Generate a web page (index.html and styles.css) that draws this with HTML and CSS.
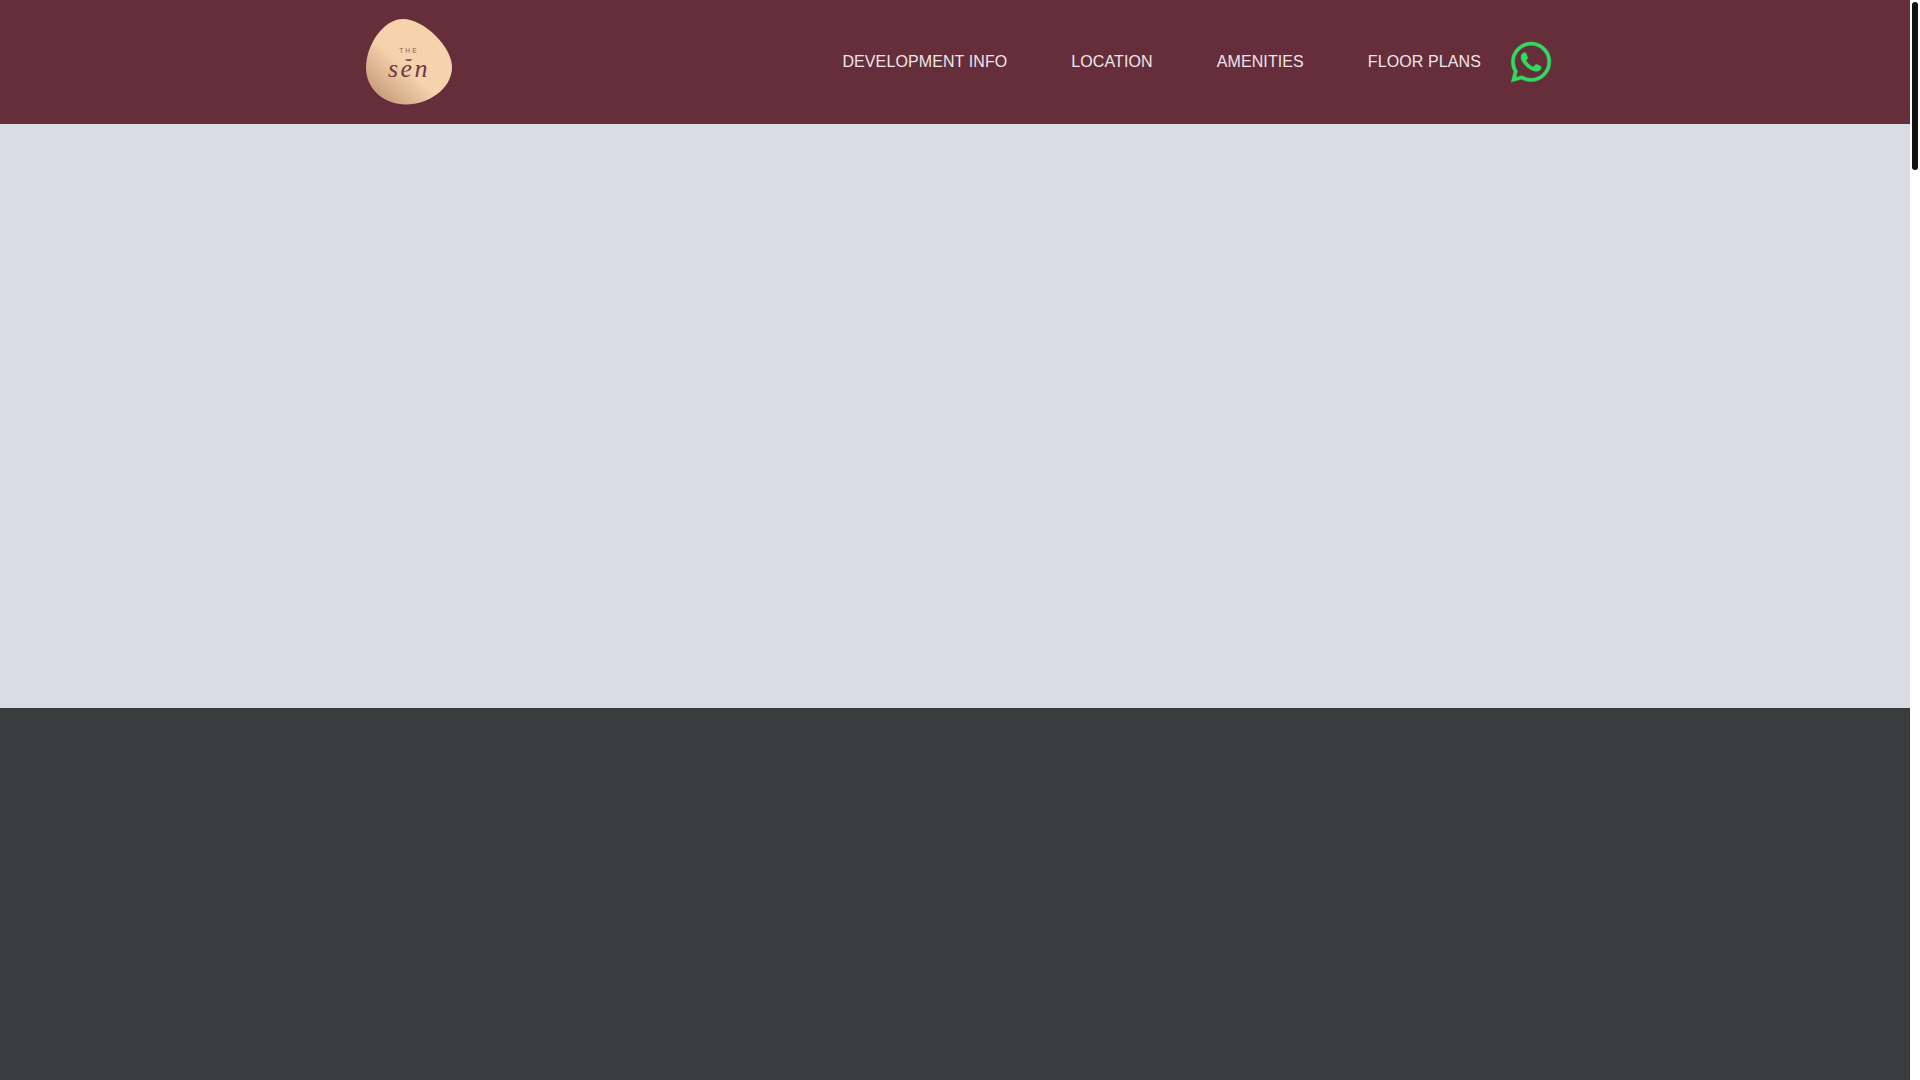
FILE: index.html
```html
<!DOCTYPE html>
<html lang="en">
<head>
<meta charset="utf-8">
<title>The Sen</title>
<link rel="stylesheet" href="styles.css">
</head>
<body>
<div class="page">
  <main class="main">
    <header class="header">
      <a class="logo" href="#" aria-label="The Sen">
        <svg class="logo-svg" viewBox="0 0 86 86" width="86" height="86">
          <defs>
            <linearGradient id="blob" x1="0.1" y1="0.9" x2="0.44" y2="0.54">
              <stop offset="0" stop-color="#c59b7a"/>
              <stop offset="1" stop-color="#f6d3ac"/>
            </linearGradient>
          </defs>
          <path fill="url(#blob)" d="M0 49C0 25 18 0 37 0C58 0 86 28 86 48C86 70 62 85.5 40 85.5C18 85.5 0 70 0 49Z"/>
          <text class="logo-the" x="43" y="34.3" text-anchor="middle">THE</text>
          <path class="logo-bar" d="M38.5 40.6L46.5 40.3L44 41.9L41 41.8Z"/>
          <text class="logo-sen" x="43" y="58" text-anchor="middle">sen</text>
        </svg>
      </a>
      <div class="header-right">
        <nav class="nav">
          <a class="nav-link" href="#">DEVELOPMENT INFO</a>
          <a class="nav-link" href="#">LOCATION</a>
          <a class="nav-link" href="#">AMENITIES</a>
          <a class="nav-link" href="#">FLOOR PLANS</a>
        </nav>
        <a class="whatsapp" href="#" aria-label="WhatsApp">
          <svg viewBox="0 0 24 24" width="40" height="40"><path class="whatsapp-path" d="M17.472 14.382c-.297-.149-1.758-.867-2.03-.967-.273-.099-.471-.148-.67.15-.197.297-.767.966-.94 1.164-.173.199-.347.223-.644.075-.297-.15-1.255-.463-2.39-1.475-.883-.788-1.48-1.761-1.653-2.059-.173-.297-.018-.458.13-.606.134-.133.298-.347.446-.52.149-.174.198-.298.298-.497.099-.198.05-.371-.025-.52-.075-.149-.669-1.612-.916-2.207-.242-.579-.487-.5-.669-.51-.173-.008-.371-.01-.57-.01-.198 0-.52.074-.792.372-.272.297-1.04 1.016-1.04 2.479 0 1.462 1.065 2.875 1.213 3.074.149.198 2.096 3.2 5.077 4.487.709.306 1.262.489 1.694.625.712.227 1.36.195 1.871.118.571-.085 1.758-.719 2.006-1.413.248-.694.248-1.289.173-1.413-.074-.124-.272-.198-.57-.347m-5.421 7.403h-.004a9.87 9.87 0 01-5.031-1.378l-.361-.214-3.741.982.998-3.648-.235-.374a9.86 9.86 0 01-1.51-5.26c.001-5.45 4.436-9.884 9.888-9.884 2.64 0 5.122 1.03 6.988 2.898a9.825 9.825 0 012.893 6.994c-.003 5.45-4.437 9.884-9.885 9.884m8.413-18.297A11.815 11.815 0 0012.05 0C5.495 0 .16 5.335.157 11.892c0 2.096.547 4.142 1.588 5.945L.057 24l6.305-1.654a11.882 11.882 0 005.683 1.448h.005c6.554 0 11.89-5.335 11.893-11.893a11.821 11.821 0 00-3.48-8.413z"/></svg>
        </a>
      </div>
    </header>
    <section class="hero"></section>
    <section class="dark"></section>
  </main>
  <div class="scrollbar"><div class="scroll-thumb"></div></div>
</div>
</body>
</html>
```
FILE: styles.css
```css
* { box-sizing: border-box; }
html, body { margin: 0; height: 100%; overflow: hidden; background: #fff; }
.page { display: flex; height: 1080px; }
.main { flex: 1; display: flex; flex-direction: column; min-width: 0; }
.header {
  height: 124px;
  background: #662e3b;
  display: flex;
  align-items: center;
  justify-content: space-between;
  padding: 0 359px 0 366px;
}
.logo { display: block; height: 86px; }
.logo-svg { display: block; }
.logo-the { font: 6.5px "Liberation Sans", sans-serif; letter-spacing: 2.2px; fill: #85555a; }
.logo-bar { fill: #662e3b; }
.logo-sen { font: italic 26px "Liberation Serif", serif; letter-spacing: 2.4px; fill: #6e3845; }
.header-right { display: flex; align-items: center; gap: 30px; }
.nav { display: flex; gap: 64px; }
.nav-link {
  font: 16px/18px "Liberation Sans", Arial, sans-serif;
  letter-spacing: 0.1px;
  color: #efe6e8;
  text-decoration: none;
  margin-top: -1px;
}
.whatsapp { display: block; height: 40px; }
.whatsapp svg { display: block; overflow: visible; }
.whatsapp-path { fill: #2fdc60; stroke: #2fdc60; stroke-width: 0.25; }
.hero { height: 584px; background: #d9dce5; }
.dark { flex: 1; background: #3a3b3d; }
.scrollbar { width: 10px; padding: 2px 2px 0; }
.scroll-thumb { height: 168px; background: #111; border-radius: 3px; }
```
